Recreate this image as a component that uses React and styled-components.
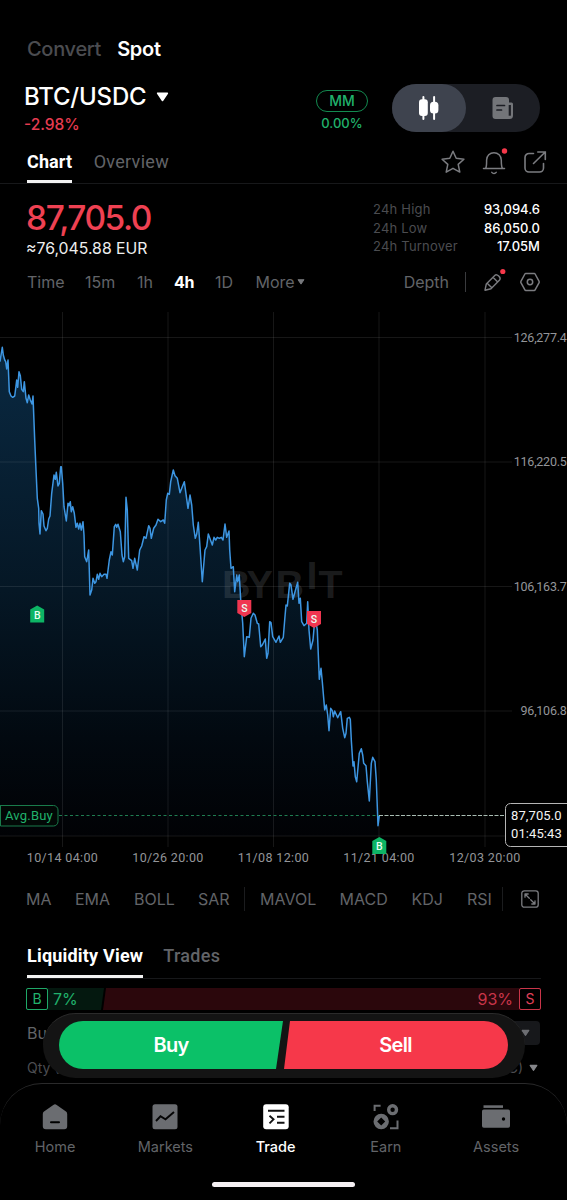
import React from "react";
import styled, { createGlobalStyle } from "styled-components";

const inter = `Inter, "Liberation Sans", sans-serif`;
const roboto = `Roboto, "Liberation Sans", sans-serif`;
const c = {
  bg: "#000",
  white: "#fff",
  dim: "#4b4c50",
  mid: "#626468",
  icon: "#7b7c80",
  line: "#17181a",
  green: "#20b26c",
  brightGreen: "#0bc168",
  red: "#f6384a",
  price: "#ef4152",
};

const GlobalStyle = createGlobalStyle`
  * { box-sizing: border-box; }
  body { margin: 0; background: ${c.bg}; }
`;

const Screen = styled.div`
  position: relative;
  width: 567px;
  height: 1200px;
  overflow: hidden;
  background: ${c.bg};
  color: ${c.white};
  font-family: ${inter};
  display: flex;
  flex-direction: column;
`;

const Label = styled.span`
  display: block;
  white-space: nowrap;
  font-family: ${(p) => (p.$roboto ? roboto : inter)};
  font-size: ${(p) => p.$size}px;
  font-weight: ${(p) => p.$weight || 400};
  line-height: ${(p) => p.$lh || 20}px;
  letter-spacing: ${(p) => p.$ls || 0}px;
  color: ${(p) => p.$color || c.white};
`;

const ModeTabs = styled.div`
  display: flex;
  gap: 16px;
  height: 78px;
  padding: 37px 27px 0;
`;

const PairHeader = styled.header`
  display: flex;
  height: 62px;
  padding: 4px 27px 0 24px;
`;
const PairInfo = styled.div`
  flex: 1;
`;
const PairName = styled.div`
  display: flex;
  align-items: center;
  gap: 10px;
  height: 30px;
`;
const Maker = styled.div`
  display: flex;
  flex-direction: column;
  align-items: center;
  gap: 1px;
  padding-top: 8px;
  margin-right: 24px;
`;
const MakerBadge = styled.div`
  display: flex;
  align-items: center;
  justify-content: center;
  width: 52px;
  height: 22px;
  border: 1px solid #138a50;
  border-radius: 11px;
`;
const ModeSwitch = styled.div`
  display: flex;
  width: 148px;
  height: 48px;
  margin-top: 2px;
  border-radius: 24px;
  background: #1c1e24;
`;
const SwitchOption = styled.div`
  display: grid;
  place-items: center;
  width: 74px;
  height: 48px;
  border-radius: 24px;
  background: ${(p) => (p.$active ? "#3e434e" : "transparent")};
`;

const TabBar = styled.div`
  display: flex;
  gap: ${(p) => p.$gap}px;
  height: ${(p) => p.$height}px;
  margin: 0 ${(p) => p.$inset}px;
  padding: 0 ${(p) => 27 - p.$inset}px;
  border-bottom: 1px solid ${c.line};
`;
const Tab = styled.div`
  display: flex;
  align-items: center;
  padding: ${(p) => p.$drop}px 0 1px;
  border-bottom: 3px solid ${(p) => (p.$active ? "#f2f2f2" : "transparent")};
`;
const TabActions = styled.div`
  display: flex;
  align-items: center;
  gap: 17px;
  margin: 0 -7px 0 auto;
`;

const PriceSection = styled.section`
  display: flex;
  justify-content: space-between;
  height: 83px;
  padding: 15px 27px 0 26px;
`;
const Stats = styled.div`
  width: 167px;
  padding-top: 1px;
`;
const StatRow = styled.div`
  display: flex;
  justify-content: space-between;
  height: 18.5px;
`;

const IntervalRow = styled.div`
  display: flex;
  align-items: center;
  height: 30px;
  padding: 0 27px;
`;
const Slot = styled.div`
  display: flex;
  align-items: center;
  gap: 2px;
  width: ${(p) => p.$width}px;
`;
const VLine = styled.i`
  display: block;
  width: 1px;
  height: ${(p) => p.$height}px;
  background: ${(p) => p.$color || "#3a3b3e"};
  margin-right: ${(p) => p.$after}px;
`;
const Depth = styled.div`
  margin: 0 16px 0 auto;
`;
const IconGap = styled.div`
  display: flex;
  gap: 17px;
`;

const ChartArea = styled.svg`
  display: block;
  flex: none;
  width: 567px;
  height: 584px;
`;

const IndicatorRow = styled.div`
  display: flex;
  align-items: center;
  height: 30px;
  margin-top: 3px;
  padding: 0 28px 0 26px;
`;

const LiquidityBar = styled.div`
  display: flex;
  height: 22px;
  margin: 9px 26px 0;
`;
const BuyShare = styled.div`
  display: flex;
  align-items: center;
  gap: 5px;
  width: 78px;
  background: #04180f;
  clip-path: polygon(0 0, 100% 0, calc(100% - 3px) 100%, 0 100%);
`;
const SellShare = styled.div`
  display: flex;
  flex: 1;
  align-items: center;
  justify-content: flex-end;
  gap: 6px;
  margin-left: -1px;
  background: #2b070c;
  clip-path: polygon(3px 0, 100% 0, 100% 100%, 0 100%);
`;
const SideBox = styled.div`
  display: grid;
  place-items: center;
  width: 22px;
  height: 22px;
  border: 1.5px solid ${(p) => p.$color};
  border-radius: 2px;
  background: #000;
`;
const BookHeader = styled.div`
  display: flex;
  align-items: center;
  justify-content: space-between;
  height: ${(p) => p.$height}px;
  padding: 0 27px;
`;
const Precision = styled.div`
  display: flex;
  align-items: center;
  justify-content: flex-end;
  width: 64px;
  height: 24px;
  padding-right: 10px;
  border-radius: 4px;
  background: #17181b;
`;
const UnitPicker = styled.div`
  display: flex;
  align-items: center;
  gap: 6px;
  padding-right: 2px;
`;

const TradeDock = styled.div`
  position: absolute;
  left: 43px;
  top: 1013px;
  display: flex;
  width: 482px;
  height: 65px;
  padding: 8px 16px;
  border-radius: 33px;
  background: #141414;
  border-top: 1px solid #2b2b2b;
`;
const DockButton = styled.button`
  display: grid;
  place-items: center;
  height: 48px;
  margin-top: -1px;
  padding: 0;
  border: 0;
  width: ${(p) => (p.$buy ? 224 : 225)}px;
  background: ${(p) => (p.$buy ? c.brightGreen : c.red)};
  border-radius: ${(p) => (p.$buy ? "24px 0 0 24px" : "0 24px 24px 0")};
  clip-path: ${(p) =>
    p.$buy
      ? "polygon(0 0, 100% 0, calc(100% - 7px) 100%, 0 100%)"
      : "polygon(7px 0, 100% 0, 100% 100%, 1px 100%)"};
`;

const BottomNav = styled.nav`
  position: absolute;
  left: 0;
  right: 0;
  bottom: 0;
  height: 117px;
  background: #000;
  border-top: 1px solid #2a2a2b;
  border-radius: 42px 42px 0 0;
  &::after {
    content: "";
    position: absolute;
    left: 212px;
    bottom: 13px;
    width: 143px;
    height: 5px;
    border-radius: 3px;
    background: #f5f0f3;
  }
`;
const NavItems = styled.div`
  display: flex;
  padding-top: 19px;
`;
const NavItem = styled.div`
  display: flex;
  flex-direction: column;
  align-items: center;
  gap: 3px;
  width: 110.25px;
`;

const Caret = ({ w = 8, h = 6, color = c.mid }) => (
  <svg width={w} height={h} viewBox="0 0 12 9">
    <path d="M1.5 1h9L6 7.7Z" fill={color} stroke={color} strokeWidth="1.4" strokeLinejoin="round" />
  </svg>
);

const CandleIcon = () => (
  <svg width="22" height="24" viewBox="0 0 22 24" fill="#fff">
    <rect x="4.400" y="0" width="2" height="24" rx="1" />
    <rect x="1" y="3.300" width="8.800" height="16.800" rx="3" />
    <rect x="15.100" y="0" width="2" height="24" rx="1" />
    <rect x="12" y="5.700" width="8.400" height="11.800" rx="3.500" />
  </svg>
);

const NewsIcon = () => (
  <svg width="22" height="22" viewBox="0 0 22 22">
    <path d="M3.5 0h10.5a3 3 0 0 1 3 3v2.5h2.5a1.5 1.5 0 0 1 1.5 1.5v11.500a3.500 3.500 0 0 1-3.500 3.500H3.500a3 3 0 0 1-3-3V3a3 3 0 0 1 3-3Z" fill="#737579" />
    <path d="M17.800 8v10.700" stroke="#1c1e24" strokeWidth="2.200" />
    <path d="M5 8.500h7.500M5 13h4.500" stroke="#1c1e24" strokeWidth="1.700" strokeLinecap="round" />
  </svg>
);

const StarIcon = () => (
  <svg width="24" height="24" viewBox="0 0 24 24" fill="none" stroke={c.icon} strokeWidth="1.500" strokeLinejoin="round">
    <path d="m12 1.300 3.200 7 7.700.9-5.700 5.200 1.600 7.700L12 18.300l-6.800 3.800 1.600-7.700-5.700-5.200 7.700-.9Z" />
  </svg>
);
const BellIcon = () => (
  <svg width="24" height="26" viewBox="0 0 24 26" fill="none" stroke={c.icon} strokeWidth="1.500" strokeLinecap="round" overflow="visible">
    <path d="M1.500 19.500h21M3.700 19.200c1-2 .9-3.500.9-8.200a7.300 7.300 0 0 1 14.700 0c0 4.700 0 6.200 1 8.200M9.800 23.400c1.200 1.500 3.300 1.500 4.400 0" />
    <circle cx="22.500" cy="2" r="2.700" fill={c.red} stroke="none" />
  </svg>
);
const ShareIcon = () => (
  <svg width="24" height="24" viewBox="0 0 24 24" fill="none" stroke={c.icon} strokeWidth="1.600" strokeLinecap="round">
    <path d="M10.500 3.500H6a4 4 0 0 0-4 4V18a4 4 0 0 0 4 4h10.500a4 4 0 0 0 4-4v-4.500M14.800 2h7.500v7.500M22 2.300 10.500 13.500" />
  </svg>
);
const PencilIcon = () => (
  <svg width="20" height="20" viewBox="0 0 20 20" fill="none" stroke={c.icon} strokeWidth="1.400" strokeLinejoin="round" overflow="visible">
    <path d="M2 18.200 3.300 12 12 3.200c1.800-1.800 6.600 2.500 4.600 4.800L8 16.700ZM4.200 11.200l4.600 4.600M10 5.300l4.700 4.600" />
    <circle cx="19.800" cy="-.5" r="2.600" fill={c.red} stroke="none" />
  </svg>
);
const HexIcon = () => (
  <svg width="20" height="20" viewBox="0 0 20 20" fill="none" stroke={c.icon} strokeWidth="1.500" strokeLinejoin="round">
    <path d="M5.800 1.500h8.400a1 1 0 0 1 .9.500l4 7.300a1.300 1.300 0 0 1 0 1.300l-4 7.300a1 1 0 0 1-.9.600H5.800a1 1 0 0 1-.9-.6l-4-7.300a1.300 1.300 0 0 1 0-1.300L4.900 2a1 1 0 0 1 .9-.5Z" />
    <circle cx="10" cy="10" r="2.700" />
  </svg>
);
const ExpandIcon = () => (
  <svg width="18" height="18" viewBox="0 0 18 18" fill="none" stroke={c.icon} strokeWidth="1.300" strokeLinecap="round" strokeLinejoin="round">
    <rect x=".8" y=".8" width="16.400" height="16.400" rx="2.500" />
    <path d="M4 7.200V4h3.200M4 4l4.300 4.300M14 10.800V14h-3.200M14 14 9.700 9.700" />
  </svg>
);

const HomeIcon = () => (
  <svg width="28" height="28" viewBox="0 0 28 28">
    <path d="M12.300 1.900a2.600 2.600 0 0 1 3.400 0l9.300 6.600a3 3 0 0 1 1.200 2.400v12.300a3 3 0 0 1-3 3H4.800a3 3 0 0 1-3-3V10.900a3 3 0 0 1 1.200-2.400Z" fill="#6b6d71" />
    <path d="M10 19.300h8" stroke="#000" strokeWidth="2" strokeLinecap="round" />
  </svg>
);
const MarketsIcon = () => (
  <svg width="28" height="28" viewBox="0 0 28 28">
    <rect x="1.500" y="1.300" width="25" height="25" rx="2.500" fill="#6b6d71" />
    <path d="m5 18 4.500-4.700 5 3L23 9" fill="none" stroke="#050505" strokeWidth="1.900" />
  </svg>
);
const TradeIcon = () => (
  <svg width="28" height="28" viewBox="0 0 28 28">
    <rect x="1.200" y="1.300" width="25.500" height="25" rx="3" fill="#fff" />
    <path d="M6 7.800h16.500M15 13.700h7.500M15 19.800h7.500M7.500 12.800l4 3.500-4 4" fill="none" stroke="#111" strokeWidth="1.900" />
  </svg>
);
const EarnIcon = () => (
  <svg width="28" height="28" viewBox="0 0 28 28" fill="none" stroke="#6b6d71">
    <path d="M2.600 8V2.800h6M18 25.200h7.500v-7.700" strokeWidth="2" />
    <circle cx="20.600" cy="6.700" r="3.900" strokeWidth="3.400" />
    <path fillRule="evenodd" stroke="none" fill="#6b6d71" d="M9.200 10.800a7.700 7.700 0 1 1 0 15.400 7.700 7.700 0 0 1 0-15.400Zm0 3.700-4 4 4 4 4-4Z" />
  </svg>
);
const AssetsIcon = () => (
  <svg width="28" height="28" viewBox="0 0 28 28">
    <rect x="1.500" y="2.300" width="19.500" height="2.600" fill="#6b6d71" />
    <rect x="0" y="6.500" width="28" height="18.300" rx="1.800" fill="#6b6d71" />
    <circle cx="21.500" cy="16" r="1.700" fill="#000" />
  </svg>
);

const points = [
  // first leg, left edge to the mid October low
  ...scale("0,155 4,130 7,112 10,135 14,150 17,155 20,177 24,150 26,200 28,245 33,258 38,262 44,258 47,235 50,210 53,232 57,185 61,197 65,238 70,245 73,215 78,265 82,278 86,255 91,270 96,282 99,258 104,390 107,460 112,565 116,595 117,640 120,672 124,602 129,612 132,648 138,662 142,655 146,627 150,618 155,550 162,495 166,508 169,487 174,528 178,520 182,470 184,470 188,520 192,590 199,633 204,580 207,587 211,575 214,605 218,590 223,610 228,652 232,640 236,657 240,640 244,660 249,635 252,675 254,740 260,755 266,720 270,855 275,840 279,805 284,820 288,815 292,793 296,808 300,790 305,800 312,793 318,793 321,805 328,750 333,725 337,735 343,650 347,643 350,652 354,643 361,665 366,735 370,755 374,740 378,562 382,600 386,745 395,752 399,775 404,745 412,780 419,720 425,708 432,680 438,685 446,647 450,655 454,685 461,655 468,645 474,628 482,635 490,630 494,640 499,570 503,550 508,553 512,515 520,480 525,497 532,505 540,548 547,530 553,515 564,595 570,555 575,585 580,645 586,685 590,672", 0, 310),
  // late October
  ...scale("295,217 300,290 307,395 315,300 320,290 325,252 337,285 342,262 347,270 352,262 358,265 364,262 369,270 375,222 380,262 387,243", 100, 450),
  // early November
  ...scale("119,300 123,355 130,350 134,425 140,375 143,395 148,375 152,450 158,520 163,620 170,560 178,562 183,505 190,490 195,495 202,520 206,522 212,590 217,585 226,567 230,625 234,610 239,515 243,518 248,560 258,577 267,558 271,577 280,562 284,510 288,465 292,468 299,400 303,405 309,448 318,415 323,397 327,460 331,445 335,515 342,527 350,520 353,455 357,540 362,597 369,570 375,500 382,540", 190, 450),
  // final drop
  ...scale("88,238 93,205 97,245 104,330 109,315 113,345 117,392 122,325 127,332 130,350 134,333 143,353 152,335 158,385 164,413 168,400 172,355 178,352 181,358 184,420 189,498 192,485 196,530 200,545 208,460 214,446 218,465 221,490 228,497 232,545 238,603 244,490 248,472 255,485 259,540 262,620 264,677 268,647", 290, 600),
];

function scale(list, dx, dy) {
  return list.split(" ").map((pair) => {
    const [x, y] = pair.split(",").map(Number);
    return [(x / 3 + dx).toFixed(1), (y / 3 + dy).toFixed(1)];
  });
}

const linePath = "M" + points.map((p) => p.join(" ")).join("L");
const levels = [
  [337.5, "126,277.4"],
  [462, "116,220.5"],
  [586.5, "106,163.7"],
  [711, "96,106.8"],
  [836, ""],
];
const dates = [
  [62.5, "10/14 04:00"],
  [168, "10/26 20:00"],
  [273.500, "11/08 12:00"],
  [379, "11/21 04:00"],
  [485, "12/03 20:00"],
];
const watermark = [
  [222, 598, "B"],
  [246.500, 598, "Y"],
  [275.500, 598, "B"],
  [306.500, 589, "I"],
  [318.500, 598, "T"],
];

const Marker = ({ x, y, side }) => {
  const buy = side === "B";
  return (
    <g transform={`translate(${x} ${y})`}>
      <path
        d={buy ? "M-7-5 0-9 7-5V8H-7Z" : "M-7-8H7V5L0 9-7 5Z"}
        fill={buy ? "#0db565" : "#f03650"}
      />
      <text y={buy ? 4 : 3.500} textAnchor="middle" fontFamily={roboto} fontSize="10.500" fontWeight="500" fill="#e9fff3">
        {side}
      </text>
    </g>
  );
};

const PriceChart = () => (
  <ChartArea viewBox="0 297 567 584">
    <defs>
      <linearGradient id="area" gradientUnits="userSpaceOnUse" x1="0" y1="345" x2="0" y2="836">
        <stop offset="0" stopColor="#0a2942" />
        <stop offset=".5" stopColor="#051725" />
        <stop offset=".8" stopColor="#020910" />
        <stop offset="1" stopColor="#010205" />
      </linearGradient>
    </defs>
    <path d={`${linePath}V836H0Z`} fill="url(#area)" />
    {levels.map(([y]) => (
      <path key={y} d={`M0 ${y}H${y === 836 ? 505 : 512}`} stroke="#fff" strokeOpacity=".09" />
    ))}
    {dates.map(([x]) => (
      <path key={x} d={`M${x} 312V847`} stroke="#fff" strokeOpacity=".09" />
    ))}
    <g fontFamily='"Liberation Sans", Arial, sans-serif' fontWeight="700" fontSize="39.500" fill="#8f9498" fillOpacity=".2">
      {watermark.map(([x, y, t]) => (
        <text key={x} x={x} y={y}>{t}</text>
      ))}
    </g>
    <path d={linePath} fill="none" stroke="#3d96e2" strokeWidth="1.500" strokeLinejoin="round" />
    <path d="M59 815.500H379" stroke="#1f7d51" strokeDasharray="3 2.500" />
    <path d="M379 815.500H505" stroke="#a9bdb3" strokeDasharray="4 1.500" />
    <g fontFamily={roboto} fontSize="12.500" fill="#939599">
      {levels.map(([y, t]) => (
        <text key={y} x="566.500" y={y + 4} textAnchor="end" letterSpacing="-.25">{t}</text>
      ))}
      {dates.map(([x, t]) => (
        <text key={x} x={x} y="861.500" textAnchor="middle" letterSpacing=".35">{t}</text>
      ))}
    </g>
    <path d="M0 805.500H53.500a4.500 4.500 0 0 1 4.500 4.500V821.500a4.500 4.500 0 0 1-4.500 4.500H.5V805.500" fill="#020806" stroke="#197b4b" />
    <text x="5" y="820" fontFamily={roboto} fontSize="13" letterSpacing=".2" fill="#20b26c">Avg.Buy</text>
    <rect x="505.500" y="803.500" width="70" height="43" rx="5" fill="#000" stroke="#b5b5b5" />
    <g fontFamily={roboto} fontSize="13" letterSpacing=".1" fill="#f3f3f3">
      <text x="511" y="820">87,705.0</text>
      <text x="511" y="838">01:45:43</text>
    </g>
    <Marker x={37.200} y={614.500} side="B" />
    <Marker x={244.300} y={608} side="S" />
    <Marker x={314} y={619} side="S" />
    <Marker x={379.300} y={846} side="B" />
  </ChartArea>
);

const stats = [
  ["24h High", "93,094.6"],
  ["24h Low", "86,050.0"],
  ["24h Turnover", "17.05M"],
];
const intervals = [
  ["Time", 58],
  ["15m", 52],
  ["1h", 37],
  ["4h", 41],
  ["1D", 40.500],
];
const overlays = [
  ["MA", 49],
  ["EMA", 59],
  ["BOLL", 64],
  ["SAR", 46],
];
const oscillators = [
  ["MAVOL", 79.500],
  ["MACD", 72],
  ["KDJ", 55.500],
  ["RSI", 34.500],
];
const nav = [
  ["Home", HomeIcon],
  ["Markets", MarketsIcon],
  ["Trade", TradeIcon],
  ["Earn", EarnIcon],
  ["Assets", AssetsIcon],
];

export default function App() {
  return (
    <Screen>
      <GlobalStyle />
      <ModeTabs>
        <Label $size={20} $weight={500} $lh={24} $ls={-0.3} $color={c.dim}>Convert</Label>
        <Label $size={20} $weight={600} $lh={24} $ls={-0.3}>Spot</Label>
      </ModeTabs>
      <PairHeader>
        <PairInfo>
          <PairName>
            <Label $size={24} $weight={550} $lh={30} $ls={-0.2}>BTC/USDC</Label>
            <Caret w={13} h={10} color="#fff" />
          </PairName>
          <Label $size={15.500} $weight={500} $lh={25} $color="#e63c50">-2.98%</Label>
        </PairInfo>
        <Maker>
          <MakerBadge>
            <Label $size={14} $weight={500} $color={c.green}>MM</Label>
          </MakerBadge>
          <Label $size={13} $weight={500} $color={c.green}>0.00%</Label>
        </Maker>
        <ModeSwitch>
          <SwitchOption $active><CandleIcon /></SwitchOption>
          <SwitchOption><NewsIcon /></SwitchOption>
        </ModeSwitch>
      </PairHeader>
      <TabBar $height={44} $gap={21.500} $inset={0}>
        <Tab $active $drop={4}><Label $roboto $size={18} $weight={700} $ls={0.1}>Chart</Label></Tab>
        <Tab $drop={4}><Label $roboto $size={18} $ls={0.3} $color={c.mid}>Overview</Label></Tab>
        <TabActions>
          <StarIcon />
          <BellIcon />
          <ShareIcon />
        </TabActions>
      </TabBar>
      <PriceSection>
        <div>
          <Label $size={33.500} $weight={530} $lh={38} $ls={-1.450} $color={c.price}>87,705.0</Label>
          <Label $size={15.800} $lh={24} $color="#eee">≈76,045.88 EUR</Label>
        </div>
        <Stats>
          {stats.map(([name, value]) => (
            <StatRow key={name}>
              <Label $size={13} $lh={18} $ls={0.2} $color={c.dim}>{name}</Label>
              <Label $size={13} $lh={18} $weight={500}>{value}</Label>
            </StatRow>
          ))}
        </Stats>
      </PriceSection>
      <IntervalRow>
        {intervals.map(([t, w]) => (
          <Slot key={t} $width={w}>
            <Label $size={16} $weight={t === "4h" ? 700 : 400} $ls={t === "4h" ? -0.4 : 0} $color={t === "4h" ? c.white : c.mid}>{t}</Label>
          </Slot>
        ))}
        <Slot $width={60}>
          <Label $size={16} $color={c.mid}>More</Label>
          <Caret color="#77797d" />
        </Slot>
        <Depth><Label $size={16} $color={c.mid}>Depth</Label></Depth>
        <VLine $height={20} $after={17} />
        <IconGap>
          <PencilIcon />
          <HexIcon />
        </IconGap>
      </IntervalRow>
      <PriceChart />
      <IndicatorRow>
        {overlays.map(([t, w]) => (
          <Slot key={t} $width={w}><Label $size={16} $color={c.mid}>{t}</Label></Slot>
        ))}
        <VLine $height={24} $after={15} $color="#1b1c1e" />
        {oscillators.map(([t, w]) => (
          <Slot key={t} $width={w}><Label $size={16} $color={c.mid}>{t}</Label></Slot>
        ))}
        <VLine $height={24} $after={18} $color="#1b1c1e" />
        <ExpandIcon />
      </IndicatorRow>
      <TabBar $height={65} $gap={20} $inset={26}>
        <Tab $active $drop={23}><Label $roboto $size={18} $weight={700} $ls={0.2}>Liquidity View</Label></Tab>
        <Tab $drop={23}><Label $roboto $size={18} $weight={500} $ls={0.3} $color={c.mid}>Trades</Label></Tab>
      </TabBar>
      <LiquidityBar>
        <BuyShare>
          <SideBox $color="#1fa868"><Label $size={14} $lh={18} $color={c.green}>B</Label></SideBox>
          <Label $size={16} $color={c.green}>7%</Label>
        </BuyShare>
        <SellShare>
          <Label $size={16} $color="#c93549">93%</Label>
          <SideBox $color="#c93549"><Label $size={14} $lh={18} $color="#e0405a">S</Label></SideBox>
        </SellShare>
      </LiquidityBar>
      <BookHeader $height={46}>
        <Label $size={16} $color={c.mid}>Buy</Label>
        <Precision><Caret w={9} h={8} color="#6d6e72" /></Precision>
      </BookHeader>
      <BookHeader $height={24}>
        <Label $size={14} $color={c.dim}>Qty (BTC)</Label>
        <UnitPicker>
          <Label $size={14} $color={c.dim}>Qty (BTC)</Label>
          <Caret w={9} h={8} color="#85868a" />
        </UnitPicker>
      </BookHeader>
      <TradeDock>
        <DockButton $buy><Label $size={20} $weight={600} $ls={-0.7}>Buy</Label></DockButton>
        <DockButton><Label $size={20} $weight={600} $ls={-0.7}>Sell</Label></DockButton>
      </TradeDock>
      <BottomNav>
        <NavItems>
          {nav.map(([t, Icon]) => (
            <NavItem key={t}>
              <Icon />
              <Label $size={14.500} $lh={26} $weight={t === "Trade" ? 500 : 400} $color={t === "Trade" ? c.white : c.mid}>{t}</Label>
            </NavItem>
          ))}
        </NavItems>
      </BottomNav>
    </Screen>
  );
}
